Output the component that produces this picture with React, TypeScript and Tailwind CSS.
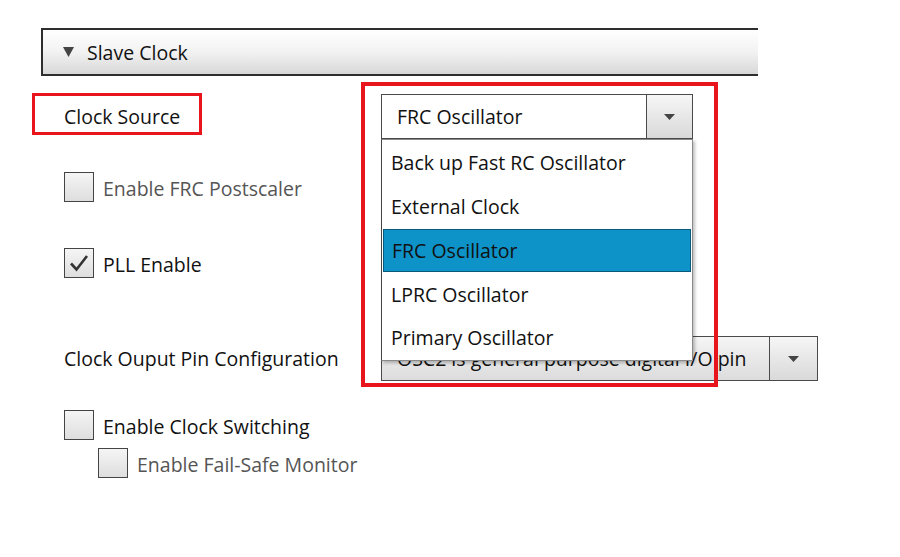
import React from "react";

const options = [
  "Back up Fast RC Oscillator",
  "External Clock",
  "FRC Oscillator",
  "LPRC Oscillator",
  "Primary Oscillator",
];

const DropButton = ({ className }: { className: string }) => {
  return (
    <div
      className={`flex items-center justify-center border-l border-[#4a4a4a] bg-gradient-to-b from-[#f6f6f6] to-[#d9d9d9] ${className}`}
    >
      <svg width="11" height="6" viewBox="0 0 11 6">
        <path d="M0 0 L11 0 L5.5 6 Z" fill="#444" />
      </svg>
    </div>
  );
};

const CheckBox = ({ checked }: { checked?: boolean }) => {
  return (
    <div className="w-[30px] h-[30px] shrink-0 border border-[#444] bg-gradient-to-b from-[#f5f5f5] to-[#dedede] flex items-center justify-center">
      {checked ? (
        <svg width="20" height="18" viewBox="0 0 20 18">
          <path
            d="M2 9.5 L7.5 15.5 L18 2"
            fill="none"
            stroke="#333"
            strokeWidth="2.6"
          />
        </svg>
      ) : (
        <></>
      )}
    </div>
  );
};

const App = () => {
  return (
    <div
      className="relative w-[900px] h-[557px] bg-white text-[#111] overflow-hidden"
      style={{ fontFamily: '"Open Sans", "Noto Sans", sans-serif' }}
    >
      <div className="pt-[28px] pl-[41px]">
        <div className="w-[717px] h-[48px] border-t-2 border-l-2 border-b-2 border-[#2e2e2e] bg-gradient-to-b from-white via-[#f2f2f2] to-[#d8d8d8] flex items-center pl-[20px] gap-[13px]">
          <svg width="11" height="10" viewBox="0 0 11 10">
            <path d="M0 0 L11 0 L5.5 10 Z" fill="#444" />
          </svg>
          <span className="text-[19.5px] leading-[26px] pt-[2px]">Slave Clock</span>
        </div>
      </div>

      <div className="flex flex-col pl-[64px] text-[19.5px]">
        <div className="flex items-center mt-[18px] h-[45px]">
          <span className="w-[317px]">Clock Source</span>
          <div className="relative w-[312px] h-[45px] border border-[#4a4a4a] bg-white flex">
            <span className="flex-1 pl-[15px] flex items-center">
              FRC Oscillator
            </span>
            <DropButton className="w-[46px]" />

            <div className="absolute z-10 left-[-1px] top-[44px] w-[312px] h-[222px] bg-white border border-[#8a8a8a] border-l-[#444] shadow-[2px_2px_3px_rgba(0,0,0,0.25)] flex flex-col pt-[1px]">
              {options.map((opt, i) => {
                return opt === "FRC Oscillator" ? (
                  <div
                    key={i}
                    className="h-[44px] mx-[1px] pl-[8px] flex items-center bg-[#0e93c8] border border-[#0a5a7c]"
                  >
                    {opt}
                  </div>
                ) : (
                  <div key={i} className="h-[44px] pl-[9px] flex items-center">
                    {opt}
                  </div>
                );
              })}
            </div>
          </div>
        </div>

        <div className="flex items-center gap-[9px] mt-[33px]">
          <CheckBox />
          <span className="text-[#555] leading-[26px] pt-[4px]">
            Enable FRC Postscaler
          </span>
        </div>

        <div className="flex items-center gap-[9px] mt-[46px]">
          <CheckBox checked />
          <span className="leading-[26px] pt-[4px]">PLL Enable</span>
        </div>

        <div className="flex items-center mt-[58px] h-[45px]">
          <span className="w-[317px]">Clock Ouput Pin Configuration</span>
          <div className="w-[437px] h-[45px] border border-[#4a4a4a] bg-gradient-to-b from-[#f5f5f5] to-[#dcdcdc] flex">
            <span className="flex-1 pl-[15px] flex items-center whitespace-nowrap overflow-hidden">
              OSC2 is general purpose digital I/O pin
            </span>
            <DropButton className="w-[48px]" />
          </div>
        </div>

        <div className="flex items-center gap-[9px] mt-[29px]">
          <CheckBox />
          <span className="leading-[26px] pt-[4px]">Enable Clock Switching</span>
        </div>

        <div className="flex items-center gap-[9px] mt-[8px] ml-[34px]">
          <CheckBox />
          <span className="text-[#555] leading-[26px] pt-[4px]">
            Enable Fail-Safe Monitor
          </span>
        </div>
      </div>

      <div className="absolute z-20 left-[32px] top-[93px] w-[170px] h-[42px] border-[3px] border-[#e8151d]" />
      <div className="absolute z-20 left-[361px] top-[82px] w-[357px] h-[305px] border-4 border-[#e8151d]" />
    </div>
  );
};

export default App;
